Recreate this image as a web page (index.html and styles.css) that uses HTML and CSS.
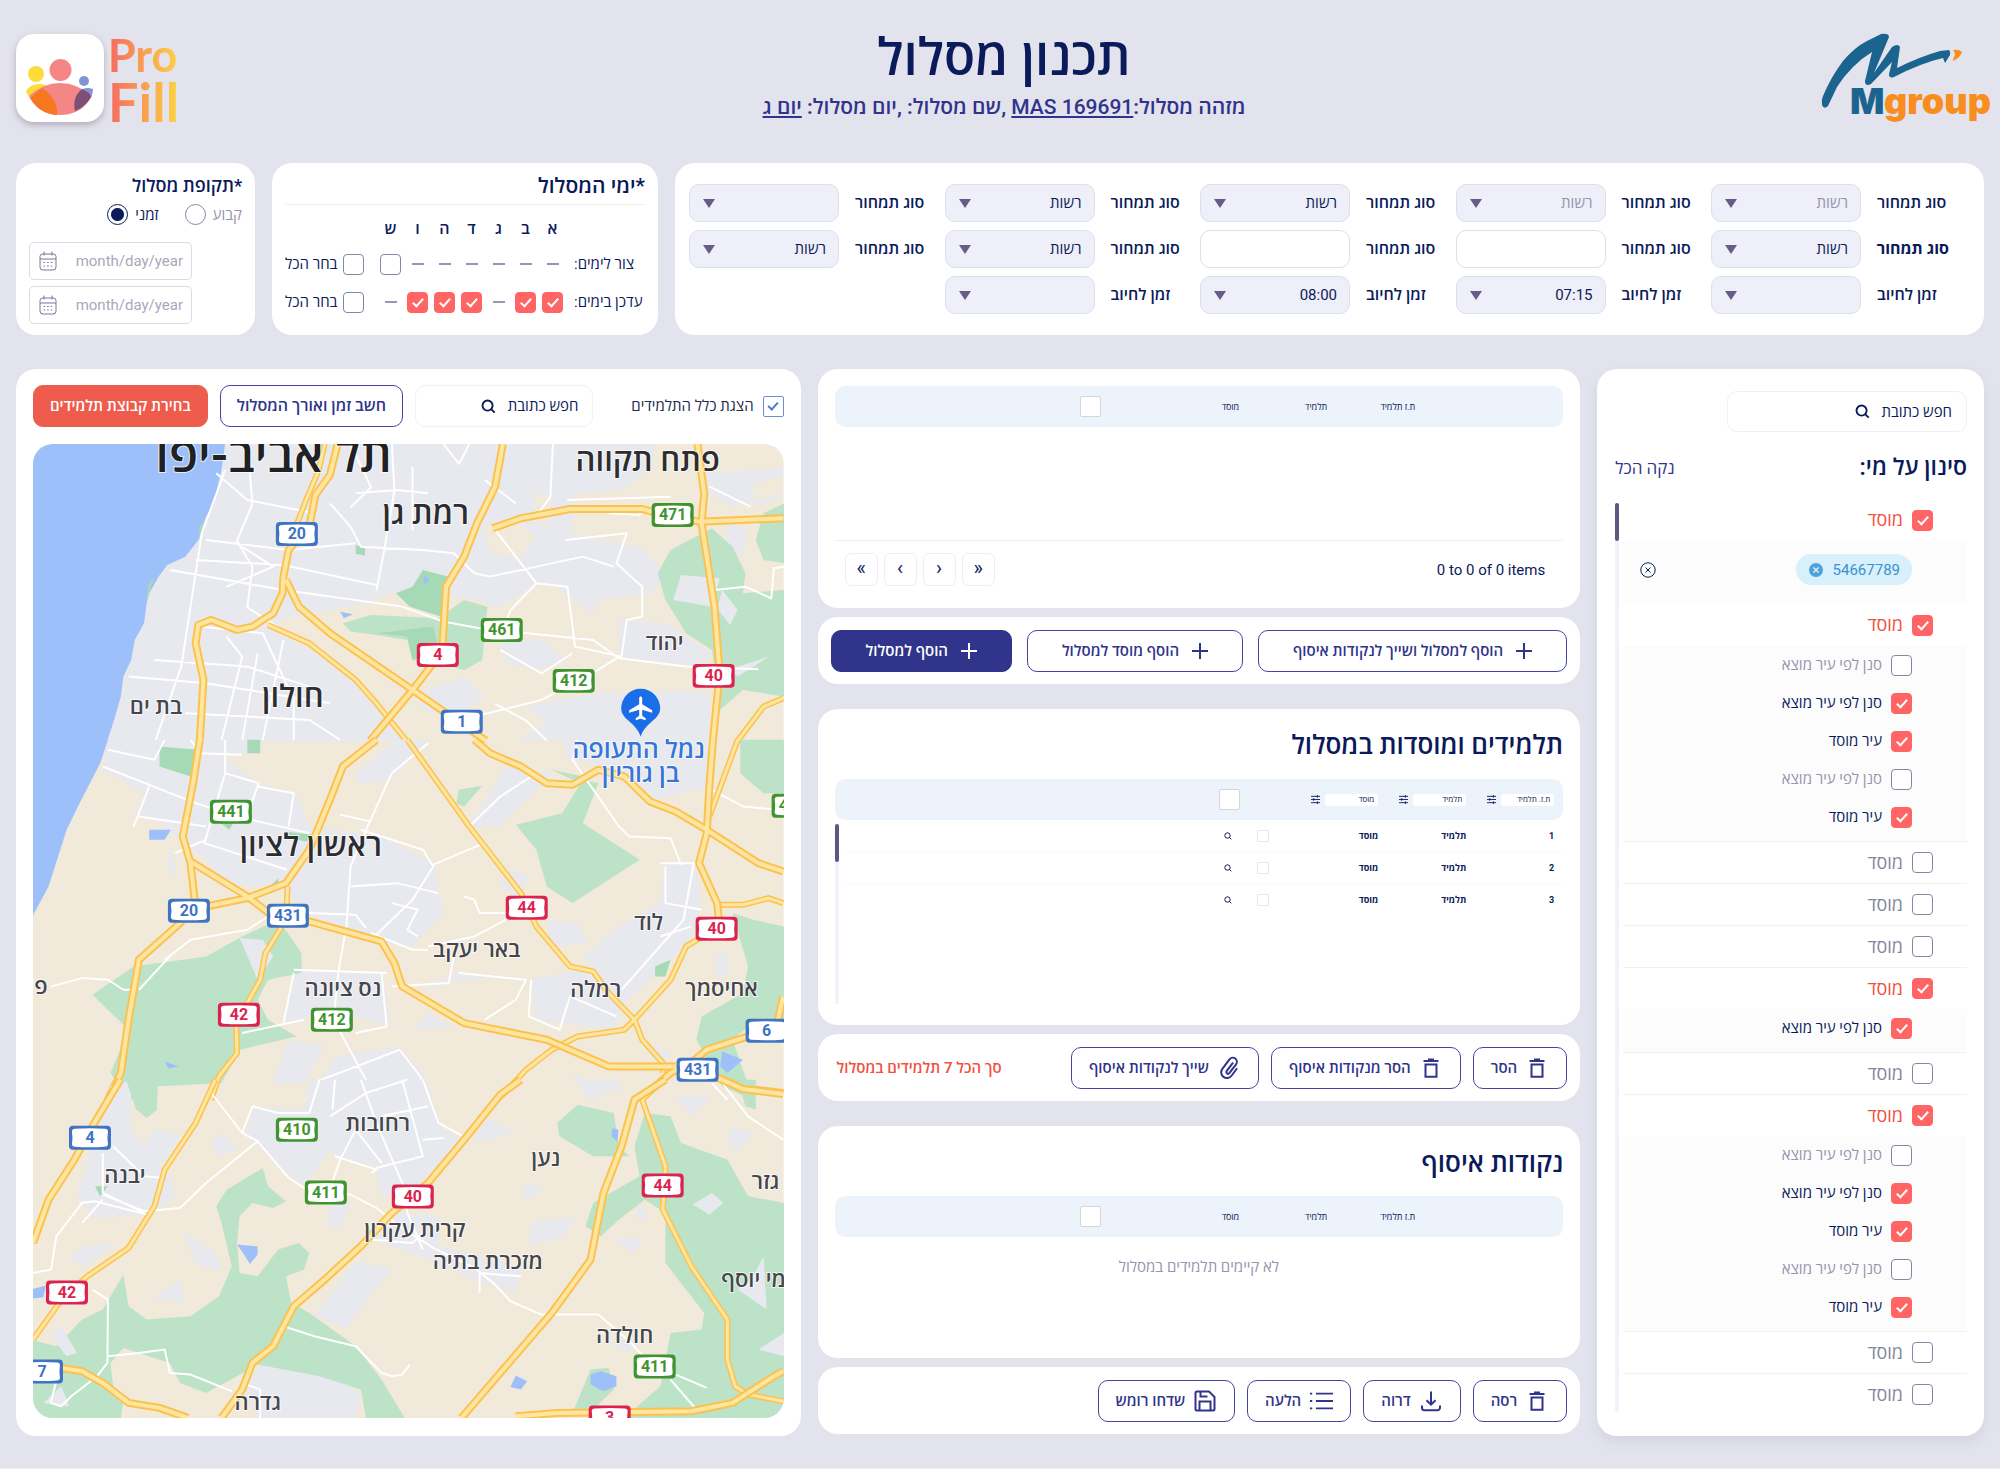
FILE: index.html
```html
<!DOCTYPE html>
<html lang="he" dir="rtl">
<head>
<meta charset="utf-8">
<meta name="viewport" content="width=device-width, initial-scale=1">
<title>תכנון מסלול</title>
<link rel="stylesheet" href="styles.css">
</head>
<body>
<svg class="sprite" aria-hidden="true">
  <symbol id="i-search" viewBox="0 0 16 16"><circle cx="7" cy="7" r="5.4"/><path d="M11 11l3.6 3.6"/></symbol>
  <symbol id="i-plus" viewBox="0 0 16 16"><path d="M8 0v16M0 8h16"/></symbol>
  <symbol id="i-trash" viewBox="0 0 24 24"><path d="M4.500 5h15M9 3.600h6M6.500 8.500v12.300h11V8.500z"/></symbol>
  <symbol id="i-clip" viewBox="0 0 24 24"><path d="M16.800 7.200l-7.600 7.600a1.700 1.700 0 0 0 2.400 2.400l7.900-7.900a4.100 4.100 0 0 0-5.800-5.800l-8.400 8.400a5.700 5.700 0 0 0 8.100 8.100l6.600-6.600" transform="rotate(-8 12 12)"/></symbol>
  <symbol id="i-download" viewBox="0 0 24 24"><path d="M12 2.500v13M7.500 11.200L12 15.700l4.500-4.500M3 16.500v2.200a2.500 2.500 0 0 0 2.500 2.500h13a2.500 2.500 0 0 0 2.500-2.500v-2.200"/></symbol>
  <symbol id="i-list" viewBox="0 0 26 24"><path d="M7.500 4H26M7.500 12H26M7.500 20H26M1 4h2.500M1 12h2.500M1 20h2.500"/></symbol>
  <symbol id="i-save" viewBox="0 0 24 24"><path d="M4 2.500h12l5.500 5.500v12a1.500 1.500 0 0 1-1.500 1.500H4A1.500 1.500 0 0 1 2.500 20V4A1.500 1.500 0 0 1 4 2.500zM6.500 21.500v-9h11v9M7.500 2.500v5h7"/></symbol>
  <symbol id="i-cal" viewBox="0 0 18 20"><path d="M3.500 3h11A2.500 2.500 0 0 1 17 5.500v10.500a3 3 0 0 1-3 3H4a3 3 0 0 1-3-3V5.500A2.500 2.500 0 0 1 3.500 3zM1 8h16M5 .500v4M13 .500v4"/><path stroke-dasharray="1.600 2" d="M4.500 11.500h9M4.500 15h9"/></symbol>
  <symbol id="i-sliders" viewBox="0 0 10 10"><path d="M0 1.500h10M0 5h10M0 8.500h10M7 0v3M3 3.500v3M7 7v3"/></symbol>
</svg>

<div class="page">
  <header class="header">
    <a class="mgroup" href="#" aria-label="Mgroup">
      <svg viewBox="0 0 171 88">
        <path fill="#1b6490" d="M2 62Q10 43 22 27 34 13 46 7L60 0q8-1 8 3L53 39 71 13q6-4 8 0l-3 21Q98 23 119 17l9-1q2 2 1 5l-5 8-2-5Q100 29 73 43q-5 2-5-3l3-12L50 50q-6 3-6-3l7-29Q41 24 32 33 23 42 16 53L7 72q-4 4-6-1-1-5 1-9z"/>
        <path fill="#f98d1e" d="M132 16q6-1 9 2-1 5-9 9 0-3 2-6 0-3-2-5z"/>
        <text x="29" y="80" class="mgroup-m">M</text><text x="63" y="80" class="mgroup-g">group</text>
      </svg>
    </a>
    <div class="heading">
      <h1>תכנון מסלול</h1>
      <p>מזהה מסלול:<a href="#"><bdi>MAS 169691</bdi></a> ,שם מסלול: ,יום מסלול: <a href="#">יום ג</a></p>
    </div>
    <a class="profill" href="#" aria-label="Pro Fill">
      <svg viewBox="0 0 170 100">
        <defs><linearGradient id="sunset" gradientUnits="userSpaceOnUse" x1="96" y1="0" x2="164" y2="0"><stop offset="0" stop-color="#f6705f"/><stop offset="1" stop-color="#fcd540"/></linearGradient></defs>
        <g fill="url(#sunset)"><text x="92" y="38" class="pro">Pro</text><text x="92" y="88" class="fill">Fill</text></g>
      </svg>
      <span class="app-tile"><svg viewBox="0 0 88 88">
        <circle cx="20" cy="40" r="8" fill="#fddb3a"/><circle cx="44.500" cy="36" r="11" fill="#f58686"/><circle cx="68" cy="47" r="5" fill="#7f95d6"/>
        <path fill="#fddb3a" d="M10 58q3-8 14-8 5 0 10 4L14 64z"/><path fill="#7f95d6" d="M63 57q6-5 14-2 0 6-4 11z"/>
        <path fill="#f58686" d="M13 62q14-13 31-13t32 13Q66 81 44 81T13 62z"/>
        <path fill="#f6781e" d="M14 64l12-10Q42 64 41 81 24 80 14 64z"/><path fill="#7b4f78" d="M66 55q9 4 9 8-6 10-16 14-3-14 7-22z"/>
      </svg></span>
    </a>
  </header>

  <section class="top">
    <form class="card fields">
      <div class="field"><label for="f1">סוג תמחור</label><span class="select"><select id="f1" class="muted"><option>רשות</option></select></span></div>
      <div class="field"><label for="f2">סוג תמחור</label><span class="select"><select id="f2" class="muted"><option>רשות</option></select></span></div>
      <div class="field"><label for="f3">סוג תמחור</label><span class="select"><select id="f3"><option>רשות</option></select></span></div>
      <div class="field"><label for="f4">סוג תמחור</label><span class="select"><select id="f4"><option>רשות</option></select></span></div>
      <div class="field"><label for="f5">סוג תמחור</label><span class="select"><select id="f5"><option></option></select></span></div>
      <div class="field"><label for="f6" class="strong">סוג תמחור</label><span class="select"><select id="f6"><option>רשות</option></select></span></div>
      <div class="field"><label for="f7">סוג תמחור</label><input id="f7" type="text"></div>
      <div class="field"><label for="f8">סוג תמחור</label><input id="f8" type="text"></div>
      <div class="field"><label for="f9">סוג תמחור</label><span class="select"><select id="f9"><option>רשות</option></select></span></div>
      <div class="field"><label for="f10">סוג תמחור</label><span class="select"><select id="f10"><option>רשות</option></select></span></div>
      <div class="field"><label for="f11">זמן לחיוב</label><span class="select"><select id="f11"><option></option></select></span></div>
      <div class="field"><label for="f12">זמן לחיוב</label><span class="select"><select id="f12"><option>07:15</option></select></span></div>
      <div class="field"><label for="f13">זמן לחיוב</label><span class="select"><select id="f13"><option>08:00</option></select></span></div>
      <div class="field"><label for="f14">זמן לחיוב</label><span class="select"><select id="f14"><option></option></select></span></div>
    </form>

    <section class="card days">
      <h2>*ימי המסלול</h2>
      <div class="day-row letters"><span></span><b>א</b><b>ב</b><b>ג</b><b>ד</b><b>ה</b><b>ו</b><b>ש</b></div>
      <div class="day-row"><span>צור לימים:</span><i></i><i></i><i></i><i></i><i></i><i></i><input type="checkbox" class="check" aria-label="צור ש"><label class="all"><input type="checkbox" class="check">בחר הכל</label></div>
      <div class="day-row"><span>עדכן בימים:</span><input type="checkbox" class="check" aria-label="עדכן א" checked><input type="checkbox" class="check" aria-label="עדכן ב" checked><i></i><input type="checkbox" class="check" aria-label="עדכן ד" checked><input type="checkbox" class="check" aria-label="עדכן ה" checked><input type="checkbox" class="check" aria-label="עדכן ו" checked><i></i><label class="all"><input type="checkbox" class="check">בחר הכל</label></div>
    </section>

    <section class="card period">
      <h2>*תקופת מסלול</h2>
      <div class="radios"><label class="muted">קבוע<input type="radio" name="period"></label><label>זמני<input type="radio" name="period" checked></label></div>
      <div class="dates">
        <div class="date"><input type="text" placeholder="month/day/year" aria-label="מתאריך"><svg class="icon"><use href="#i-cal"/></svg></div>
        <div class="date"><input type="text" placeholder="month/day/year" aria-label="עד תאריך"><svg class="icon"><use href="#i-cal"/></svg></div>
      </div>
    </section>
  </section>

  <main class="main">
    <aside class="card filter">
      <div class="search"><input type="text" placeholder="חפש כתובת" aria-label="חפש כתובת"><svg class="icon"><use href="#i-search"/></svg></div>
      <div class="filter-head"><h2>סינון על מי:</h2><button type="button" class="clear">נקה הכל</button></div>
      <div class="scroller">
        <div class="list">
          <label class="row on"><input type="checkbox" class="check" checked>מוסד</label>
          <div class="chip-row"><span class="chip">54667789<button type="button" aria-label="הסר 54667789"><svg viewBox="0 0 14 14"><circle cx="7" cy="7" r="7" fill="#4ea4da"/><path d="M4.500 4.500l5 5M9.500 4.500l-5 5" stroke="#d8effc" stroke-width="1.600"/></svg></button></span>
            <button type="button" class="reset" aria-label="נקה"><svg viewBox="0 0 16 16"><circle cx="8" cy="8" r="7.200"/><path d="M5.500 5.500l5 5M10.500 5.500l-5 5"/></svg></button></div>
          <label class="row on"><input type="checkbox" class="check" checked>מוסד</label>
          <div class="group">
            <label><input type="checkbox" class="check">סנן לפי עיר מוצא</label>
            <label class="on"><input type="checkbox" class="check" checked>סנן לפי עיר מוצא</label>
            <label class="on"><input type="checkbox" class="check" checked>עיר מוסד</label>
            <label><input type="checkbox" class="check">סנן לפי עיר מוצא</label>
            <label class="on"><input type="checkbox" class="check" checked>עיר מוסד</label>
          </div>
          <label class="row"><input type="checkbox" class="check">מוסד</label>
          <label class="row"><input type="checkbox" class="check">מוסד</label>
          <label class="row"><input type="checkbox" class="check">מוסד</label>
          <label class="row on"><input type="checkbox" class="check" checked>מוסד</label>
          <div class="group"><label class="on"><input type="checkbox" class="check" checked>סנן לפי עיר מוצא</label></div>
          <label class="row"><input type="checkbox" class="check">מוסד</label>
          <label class="row on"><input type="checkbox" class="check" checked>מוסד</label>
          <div class="group">
            <label><input type="checkbox" class="check">סנן לפי עיר מוצא</label>
            <label class="on"><input type="checkbox" class="check" checked>סנן לפי עיר מוצא</label>
            <label class="on"><input type="checkbox" class="check" checked>עיר מוסד</label>
            <label><input type="checkbox" class="check">סנן לפי עיר מוצא</label>
            <label class="on"><input type="checkbox" class="check" checked>עיר מוסד</label>
          </div>
          <label class="row"><input type="checkbox" class="check">מוסד</label>
          <label class="row"><input type="checkbox" class="check">מוסד</label>
        </div>
        <div class="track"><div class="thumb"></div></div>
      </div>
    </aside>

    <div class="middle">
      <div class="stack">
        <section class="card results">
          <table class="plain">
            <thead><tr><th>ת.ז תלמיד</th><th>תלמיד</th><th>מוסד</th><th><input type="checkbox" class="box" aria-label="בחר הכל"></th></tr></thead>
          </table>
          <div class="pager">
            <span dir="ltr">0 to 0 of 0 items</span>
            <nav dir="ltr"><button type="button">«</button><button type="button">‹</button><button type="button">›</button><button type="button">»</button></nav>
          </div>
        </section>
        <section class="card bar bar-add">
          <button type="button" class="btn wide"><svg class="icon"><use href="#i-plus"/></svg>הוסף למסלול ושייך לנקודות איסוף</button>
          <button type="button" class="btn wide"><svg class="icon"><use href="#i-plus"/></svg>הוסף מוסד למסלול</button>
          <button type="button" class="btn wide solid"><svg class="icon"><use href="#i-plus"/></svg>הוסף למסלול</button>
        </section>
      </div>

      <div class="stack">
        <section class="card students">
          <h2>תלמידים ומוסדות במסלול</h2>
          <table class="rows">
            <thead><tr>
              <th><span class="colfilter"><input type="text" value="ת.ז. תלמיד" aria-label="ת.ז. תלמיד"><svg class="icon"><use href="#i-sliders"/></svg></span></th>
              <th><span class="colfilter"><input type="text" value="תלמיד" aria-label="תלמיד"><svg class="icon"><use href="#i-sliders"/></svg></span></th>
              <th><span class="colfilter"><input type="text" value="מוסד" aria-label="מוסד"><svg class="icon"><use href="#i-sliders"/></svg></span></th>
              <th></th><th><input type="checkbox" class="box" aria-label="בחר הכל"></th></tr></thead>
          </table>
          <div class="scroller">
            <table class="rows body">
              <tbody>
                <tr><td>1</td><td>תלמיד</td><td>מוסד</td><td><input type="checkbox" class="box tiny" aria-label="שורה 1"></td><td><svg class="icon"><use href="#i-search"/></svg></td></tr>
                <tr><td>2</td><td>תלמיד</td><td>מוסד</td><td><input type="checkbox" class="box tiny" aria-label="שורה 2"></td><td><svg class="icon"><use href="#i-search"/></svg></td></tr>
                <tr><td>3</td><td>תלמיד</td><td>מוסד</td><td><input type="checkbox" class="box tiny" aria-label="שורה 3"></td><td><svg class="icon"><use href="#i-search"/></svg></td></tr>
              </tbody>
            </table>
            <div class="track"><div class="thumb"></div></div>
          </div>
        </section>
        <section class="card bar">
          <button type="button" class="btn"><svg class="icon"><use href="#i-trash"/></svg>הסר</button>
          <button type="button" class="btn"><svg class="icon"><use href="#i-trash"/></svg>הסר מנקודות איסוף</button>
          <button type="button" class="btn"><svg class="icon"><use href="#i-clip"/></svg>שייך לנקודות איסוף</button>
          <strong class="total">סך הכל 7 תלמידים במסלול</strong>
        </section>
      </div>

      <div class="stack">
        <section class="card pickups">
          <h2>נקודות איסוף</h2>
          <table class="plain">
            <thead><tr><th>ת.ז תלמיד</th><th>תלמיד</th><th>מוסד</th><th><input type="checkbox" class="box" aria-label="בחר הכל"></th></tr></thead>
          </table>
          <p>לא קיימים תלמידים במסלול</p>
        </section>
        <section class="card bar">
          <button type="button" class="btn"><svg class="icon"><use href="#i-trash"/></svg>רסה</button>
          <button type="button" class="btn"><svg class="icon"><use href="#i-download"/></svg>דרוה</button>
          <button type="button" class="btn"><svg class="icon"><use href="#i-list"/></svg>הלעה</button>
          <button type="button" class="btn"><svg class="icon"><use href="#i-save"/></svg>שדחו רומש</button>
        </section>
      </div>
    </div>

    <section class="card mapcard">
      <div class="toolbar">
        <label class="show-all"><input type="checkbox" class="check blue" checked>הצגת כלל התלמידים</label>
        <div class="search"><input type="text" placeholder="חפש כתובת" aria-label="חפש כתובת במפה"><svg class="icon"><use href="#i-search"/></svg></div>
        <button type="button" class="btn fit">חשב זמן ואורך המסלול</button>
        <button type="button" class="btn fit red">בחירת קבוצת תלמידים</button>
      </div>
      <svg class="map" viewBox="0 0 751 975" preserveAspectRatio="xMidYMid slice" role="img" aria-label="מפה">
        <rect width="751" height="975" fill="#f1e9d9"/>
        <!-- north -->
        <g transform="translate(-33.500 -84) scale(.5165 .3334)">
          <path class="urban" d="M430 252h840l-10 80-60 60-90 10v120l130 40 50 80-30 60-100 20-10 40-70-80-40-15-50 55-30 20-30-20-70-20-90-10-70 40-140 40-40 30 70 60 50 40 50 60 30 50 30 70 50 62H205l20-90 50-300 20-120 50-70 40-60 30-150z"/>
          <path class="urban" d="M1370 340l148-15v75l-100 40-50-50zM1410 490l40 20-10 80-30-40zM1020 1040l130-40 150-12 75 12v142H1000l60-50zM1200 780l90 10 90 90-20 40-160-30zM970 830l80 10 50 60-60 30-60-20zM810 1000l90-50 40 60-50 60-70-20zM640 1040l60 20 60 82H650zM1460 440l58-30v-60l-58 20z"/>
          <path class="land" d="M940 500l50-30 50 60-30 60-60-10zM1040 400l30 10-10 90-30-20zM1170 1000l100-30 60 20-150 10z"/>
          <path class="sea" d="M60 252h377l-7 78-15 100-15 40-15 70-25 50-35 25-17 35-18 50-5 30-5 60-18 50-7 60-15 50-5 60-13 70-14 66H60z"/>
          <path class="green" d="M1380 505l40 55 25 80-5 60 80-10v320l-80-20-45 60-15-180-50-50-40-100-15-80 25-70zM1520 430l-40 30-15 80 15 60 40 10zM665 790l55-25 130 10 50-55 45 20-10 160-35 30-50-20-50-10-10-60-60-15-50-10z"/>
          <path class="park" d="M820 630l50 20-15 120-60-30-27-40 32-20zM690 555l18 10v22l-18-6zM300 650l-16 75 4-50zM395 480l-8 60v-40zM730 820l60 10 10 70 50-40-10-60z"/>
          <path class="urban" d="M1320 645l75 10-15 85-75-20zM1400 690l30 60-15 45-25-50zM1410 930l80-40-60 60z"/>
          <path class="sea" d="M660 755l25 8-18 12zM822 645l12 15-12 12z"/>
          <path class="street" d="M437 330l-45 190-40 400-50 222M400 540l160 30 130-20M380 600l170 15 180 60M330 630l220 60 230 50 80 45 70 20 220 35 50 55 130 25 140 8M420 340l60 80 130 40M480 252l10 180-30 110 30 80-10 120 60 60M640 430l40 70 20 60 120 10 60 10 40 60 30 10 180-60 60 30M680 252l40 130-40 60M760 252l5 140-20 180-15 120M800 320v190M690 400l80-10 60 10M860 252l30 60 20-60M1072 252l-5 160-30 60M1000 430l-60-70M960 510l80 160 60 10 15 180 90 30 10-110 30-10v-90l-50-70 20-90-120 20M1180 460l60 5v-20M1040 670l-50 80-20 80M1110 880l-60 60-80-70M1200 890l-40 40-110 90-130 50M1375 380l80 60M1385 690l60-10 50 35 5-90 20-5M390 800l120 20 60 200v120M440 830l30 60-40 252M300 900l180 20 120 60M500 880l-30 262M550 840l-40 300M250 950l150 20 240 60M360 1060l240 20 60 60M1060 1142l-40-60-60-50M1100 420l200-10M470 560l60 60-90 60"/>
          <path class="road" d="M630 252l-12 80-22 80-20 80M520 795l80 55 90 110 40 70 58 112M1518 1015l-38 25-50 102"/>
          <path class="road2" d="M630 252l-12 80-22 80-20 80M520 795l80 55 90 110 40 70 58 112M1518 1015l-38 25-50 102"/>
          <path class="road big" d="M655 252l-15 93-28 60-12 95-40 70-10 80-2 50-18 60-40 40-30 10-50-30-25 15-5 55 15 110-7 182M555 660l25 80 60 80 160 170 142 152M975 252l-15 128-35 110-25 100-35 90-7 180-23 60-35 70-82 152M955 505l55-30 95-28h140l55 23 55 15 163-10M1352 252l13 148-5 90 25 250 10 200-13 202"/>
          <path class="road2 big" d="M655 252l-15 93-28 60-12 95-40 70-10 80-2 50-18 60-40 40-30 10-50-30-25 15-5 55 15 110-7 182M555 660l25 80 60 80 160 170 142 152M975 252l-15 128-35 110-25 100-35 90-7 180-23 60-35 70-82 152M955 505l55-30 95-28h140l55 23 55 15 163-10M1352 252l13 148-5 90 25 250 10 200-13 202"/>
        </g>
        <!-- centre -->
        <g transform="translate(-33.500 296) scale(.5165 .3334)">
          <path class="urban" d="M205 0h185l50 60 60 70 75 30 25 100 140 30 100 80 20 150-60 100-100-20-100-80-60-80-100-10-40-70-50-60-50-60-40-10 20-70-80-70zM390 0h90v40l-60 10zM700 130l60-10 70-120h-60l-80 100zM1090 0h290l-10 140-100 40-70-90-50-20-50-10zM1290 370h60l10 130-20 100-130 190-20 80-150-30-10-120 120-40-20-30 70-90 80-70zM570 690l170 10 20 160-80-30h-80l-50 20zM980 80l90 20-100 160h-60zM650 950l120-30 50 80 20 80H600zM330 310l15 110-20-40zM880 700l140 10-130 10-80 40zM560 900l70 20-40 110h-60zM980 390l50 20-30 60-30-30zM1060 540l60 10 20 60-70 10zM1390 640h20v60l-20 20zM1240 900l60 40-20 50zM830 820l50 40-80 10zM1110 1000l70 60-40 20z"/>
          <path class="sea" d="M60 0h150l-15 70-40 120-25 80-35 170-35 100z"/>
          <path class="green" d="M1000 255l90-35 40-100 30 10-30 120 110 110-130 130-50-50-20-110zM890 150l45-12-35 62-15-10zM1435 0h85v160h-40l-45-60zM180 765l80-85 140-30 70-60 70-50 45 100v60l-65 20-20 60 20 60 55 50-110 40-35 100-130 10v40h-50l-35-80 35-130zM1420 520l40 20 60 20v290l-70 10-30 40 20 90 20 90-60-40-50-140 10-70 80-70 10-80zM1070 90l60 20-20 10z"/>
          <path class="park" d="M310 20l75 10-15 80-60-30zM480 0h25v40h-25zM1270 680l30-20-10 50h-20zM425 245h30l-10 25zM555 275l50 10-10 20-40-10zM540 415v30h-20z"/>
          <path class="urban" d="M465 595l45 5 20 50-30 70z"/>
          <path class="sea" d="M290 270h42l-12 30h-30zM1400 935l40 25-30 40-14-20zM320 965l27 15-20 6z"/>
          <path class="street" d="M200 80l180 110 80 40 140 50M290 140l-30 120M270 230l130 30M437 0v100l-40 210 160 80M400 300l-60 40M437 100l65 30-25 110M500 140l70 20-10 100M830 10l-70 90-50 170-30 110-8 180-15 130-10 150 80 230M660 225l60 20M700 270l120 60 20 50-40 100-80 120M840 375l90-60M910 260l60-90 60-60M680 440l90-10 80 30M760 490l50 20-20 60 20 20M720 580l80 50h30M330 650l-60 100M320 660l50-60 110-30 40-40M100 740l60-25 50 5 30 30h15M600 520l90 5 20 40M570 700l-20 150M740 700l10 160-60 20M570 690l180 10M470 880l120-40M880 650l-10 80-110 10M890 700l130 20-20 60-60 60M1030 720l-5 110 60 40 20-100 90 60M980 540l-60 50-90 30M1120 0l-10 60 90 200 20 30 80 5 20 80M1345 370l-20 170-120 210M1280 370h70M1280 590l60-30M1380 150l60 50 70 10M900 470l20 10 10 40h50M1290 380v110l70 20M210 30l90 30 20-60M370 0l20 40 80 5M595 1080l10-50 70-40 100-60 40 80 15 70M700 1060l90-40M1380 1030l30 50"/>
          <path class="road" d="M558 440l-3 100-40 100-10 80-25 70-22 40 2 110-35 70-15 70M790 0l120 260 100 200 30 100 65 120 45 15 30 65 50 80 15 60 40 70v30M1430 0l-55 230M1390 495h50l50-20 28 15M1395 560l-65 60-30 100-70 120-20 30-90 20-50 40-50 60-55 90"/>
          <path class="road2" d="M558 440l-3 100-40 100-10 80-25 70-22 40 2 110-35 70-15 70M790 0l120 260 100 200 30 100 65 120 45 15 30 65 50 80 15 60 40 70v30M1430 0l-55 230M1390 495h50l50-20 28 15M1395 560l-65 60-30 100-70 120-20 30-90 20-50 40-50 60-55 90"/>
          <path class="road big" d="M388 0l-13 130-20 160 15 80 8 110-28 70-80 110-20 180-15 160-25 80M730 0l-65 80-25 100-40 150-45 100-75 45-80 25-30 20M370 365l110 105 50 60 70 15 140 60 25 65 15 70 120 110 160 50 120 80h130M920 0l30 40 60 40 50 50 50 5 50-45 50 20 50 75 50 30 60 55 100 100 48 25M1382 0l-7 140-5 140-15 90 35 120 5 70M1518 770l-13 90M1450 890l-80 40-30 40-40 30-60 80M1385 1010l55 35 78 15"/>
          <path class="road2 big" d="M388 0l-13 130-20 160 15 80 8 110-28 70-80 110-20 180-15 160-25 80M730 0l-65 80-25 100-40 150-45 100-75 45-80 25-30 20M370 365l110 105 50 60 70 15 140 60 25 65 15 70 120 110 160 50 120 80h130M920 0l30 40 60 40 50 50 50 5 50-45 50 20 50 75 50 30 60 55 100 100 48 25M1382 0l-7 140-5 140-15 90 35 120 5 70M1518 770l-13 90M1450 890l-80 40-30 40-40 30-60 80M1385 1010l55 35 78 15"/>
        </g>
        <!-- south -->
        <g transform="translate(-33.500 636) scale(.5165 .3334)">
          <path class="urban" d="M215 20l40-20v150l75 140 10 60-40 50-120 20-30-70 20-100zM490 80l100 10 10-90h220l40 150 40 30-70 150-90 20-10-90-80-30-10-20-50 110-40-50-70-100zM690 545l70 20-90 180-60-35zM510 850l130 40 60 50-10 75H500l-30-85zM770 400l80 10v90l160 60-10 80-80-40-120-80-80-40zM300 150l50 20-30 80-50-30zM940 110l60 50-80 30zM1030 430l90-20-30 60-65 30zM1020 310l35 20-40 30zM1190 480l60-5-25 45zM355 455l60 60 15 60-50-20zM350 600l8 70-60-15zM160 500l65-10-60 70-30-20zM640 370h40l-20 80-25-10zM1110 0h90v40zM1310 50h70l-40 60zM1420 140l40 20-30 60-20-30zM410 190l20-30 30 50-40 20zM1180 790l60-10-20 40z"/>
          <path class="green" d="M245 0h62l-2 90-20 25-20-25zM60 780l50 20 25-40 25-40 40-30 40-105 10 95 35 40 85-10 55-60 25-90-20-130-10-50 20-50 70-65 10 55 35 45-25 20-40-15-25 40-5 80 5 90 35 10 40-80 40-20 20 30-10 50-35 20 10 80 35 30 90 100 50 100 45 115h-75l-10-85-80-40-120-35-40 35-60 50-50-30-20-60-90-45-25 45 5 70 20 40-5 55H60zM1080 130l40-55 70 25 10 100 20 30h-70l-65-60zM1250 100l50 10 20 80 90 50 40 110 70 20v645h-310l70-95 20-160 60-10 5-50-75-150V400l-40-40-50 60-35 50-30-30 15-70 90-80-10-90zM1145 870l35-5 10 65-40 60-40 10zM1430 0h35v90l-20-10z"/>
          <path class="urban" d="M1380 340l22 30-27 35-32-30zM1480 530l6 160-56-60 30-40zM1470 810l50-50v70zM1240 370l20 50-30-5zM120 740l30 80-20 10-30-60zM120 920l15 60-50-10z"/>
          <path class="sea" d="M1145 885l20-10 30 15v30l-25 15-25-20zM1000 888l22 17-12 25-20-8zM460 495l40 5v25l-15 28-10-25zM1187 145l12 5-2 35-12-15zM60 630l30-12-5 35-25 5z"/>
          <path class="park" d="M185 320h25l-15 30z"/>
          <path class="street" d="M410 40l60 120 30 25 60 110 30 30 90 20 50 40 50 60 60 60 80 60 40 50 30 50 60 40h110l60 80 30 50 60 50 60 40M500 185L400 310l-50 75-70 10-80-50M200 220v120l80 60M160 430l40-70M160 370l-50 100-10 100-35 10M155 370l30-5 100 40M220 200l60 90 40 5M490 80l-20 80M490 80l50 20h60l20-100M640 110l70-70 80-40M700 0l30 130 50 180 10 90 30 110M780 0l40 230-90 35M820 0l30 130 60 50M660 240l30-90 50 100M650 230l80 40-10 10M660 240l-20 90M740 110l90-30M720 480l80 10 20-30M180 630l30 30-1 190-20 40-50 60-20 30-20-10 10-60M210 830l60-10 50-10 10 70 40 5 80 50M550 740l60 30 80 30 50 80 20 10 20-5 15-30M930 640v-60l80 10M1400 10l50 100 68 70M1300 900l50 90M400 60l10-20M820 180l40-5M470 910l35 20v85M650 0l-5 90"/>
          <path class="road" d="M418 0l-38 130-60 140-20 110-50 125-80 85-50 70-55 120M1285 0l-40 60 45 200-5 130 55 170 70 160v120l15 80 25 25 68 20"/>
          <path class="road2" d="M418 0l-38 130-60 140-20 110-50 125-80 85-50 70-55 120M1285 0l-40 60 45 200-5 130 55 170 70 160v120l15 80 25 25 68 20"/>
          <path class="road big" d="M234 0l-54 140-35 100-50 120-30 130M1010 0l-40 45-70 135-70 130-70 90-60 100-70 100-60 80-20 60-20 60-40 50-20 80-40 85M1290 0l-60 60-25 140-35 140-25 200-75 160-100 180-75 135M1000 1010l80-10 145-3 115-2 80-25 70-70 28-25M100 860l60 15 40 35 50 60 60 15 55 30M1385-10l55 38 78 15"/>
          <path class="road2 big" d="M234 0l-54 140-35 100-50 120-30 130M1010 0l-40 45-70 135-70 130-70 90-60 100-70 100-60 80-20 60-20 60-40 50-20 80-40 85M1290 0l-60 60-25 140-35 140-25 200-75 160-100 180-75 135M1000 1010l80-10 145-3 115-2 80-25 70-70 28-25M100 860l60 15 40 35 50 60 60 15 55 30M1385-10l55 38 78 15"/>
        </g>
        <g class="city">
          <text class="xl" x="241" y="28">תל אביב-יפו</text>
          <g class="lg"><text x="615" y="27">פתח תקווה</text><text x="393" y="80">רמת גן</text><text x="260" y="263">חולון</text><text x="278" y="412">ראשון לציון</text></g>
          <text x="123" y="270">בת ים</text><text x="632" y="206">יהוד</text><text x="616" y="486">לוד</text><text x="444" y="513">באר יעקב</text><text x="310" y="552">נס ציונה</text><text x="563" y="553">רמלה</text><text x="689" y="552">אחיסמך</text><text x="5" y="550">פי</text>
          <text x="345" y="687">רחובות</text><text x="92" y="739">יבנה</text><text x="513" y="722">נען</text><text x="733" y="745">גזר</text><text x="382" y="793">קרית עקרון</text><text x="455" y="825">מזכרת בתיה</text><text x="721" y="843">מי יוסף</text><text x="592" y="899">חולדה</text><text x="225" y="967">גדרה</text>
          <g class="air"><text x="606" y="314">נמל התעופה</text><text x="608" y="338">בן גוריון</text></g>
        </g>
        <path fill="#1a6fe8" d="M608 293C604 279 588.500 276 588.500 264.500a19.500 19.500 0 0 1 39 0C627.500 276 612 279 608 293z"/>
        <path fill="#fff" d="M606.500 254q1.500-3 3 0v6.500l10 6v2.500l-10-3v6l3.500 2.500v2l-5-1.500-5 1.500v-2l3.500-2.500v-6l-10 3V266.500l10-6z"/>
        <g class="shields">
          <g class="b"><g transform="translate(264 90)"><rect/><path/><text>20</text></g><g transform="translate(429 278)"><rect/><path/><text>1</text></g><g transform="translate(156 467)"><rect/><path/><text>20</text></g><g transform="translate(255 472)"><rect/><path/><text>431</text></g><g transform="translate(734 587)"><rect/><path/><text>6</text></g><g transform="translate(665 626)"><rect/><path/><text>431</text></g><g transform="translate(57 694)"><rect/><path/><text>4</text></g><g transform="translate(9 928)"><rect/><path/><text>7</text></g></g>
          <g class="g"><g transform="translate(640 71)"><rect/><path/><text>471</text></g><g transform="translate(469 186)"><rect/><path/><text>461</text></g><g transform="translate(541 237)"><rect/><path/><text>412</text></g><g transform="translate(198 368)"><rect/><path/><text>441</text></g><g transform="translate(760 362)"><rect/><path/><text>443</text></g><g transform="translate(299 576)"><rect/><path/><text>412</text></g><g transform="translate(264 686)"><rect/><path/><text>410</text></g><g transform="translate(293 749)"><rect/><path/><text>411</text></g><g transform="translate(622 923)"><rect/><path/><text>411</text></g></g>
          <g class="r"><g transform="translate(405 211)"><rect/><path/><text>4</text></g><g transform="translate(681 232)"><rect/><path/><text>40</text></g><g transform="translate(494 464)"><rect/><path/><text>44</text></g><g transform="translate(684 485)"><rect/><path/><text>40</text></g><g transform="translate(206 571)"><rect/><path/><text>42</text></g><g transform="translate(380 753)"><rect/><path/><text>40</text></g><g transform="translate(630 742)"><rect/><path/><text>44</text></g><g transform="translate(34 849)"><rect/><path/><text>42</text></g><g transform="translate(577 974)"><rect/><path/><text>3</text></g></g>
        </g>
      </svg>
    </section>
  </main>
</div>
</body>
</html>
```

FILE: styles.css
```css
* { box-sizing: border-box; }
:root {
  --navy: #0b1a5b;
  --indigo: #30348a;
  --coral: #ff6565;
  --red: #f2503f;
  --grey: #9496ad;
  --bg: #e3e3ed;
}
body {
  margin: 0;
  background: var(--bg);
  color: var(--navy);
  font: 15px/20px Roboto, "Open Sans", "Liberation Sans", sans-serif;
}
h1, h2, p { margin: 0; }
button, input, select { font: inherit; color: inherit; }
button { cursor: pointer; }
a { color: inherit; }
.sprite { position: absolute; width: 0; height: 0; }
.icon { width: 24px; height: 24px; flex: none; fill: none; stroke: currentColor; stroke-width: 2; }
.card { background: #fff; border-radius: 20px; }
.page { padding-bottom: 32px; border-bottom: 2px solid #ededf3; }

/* header */
.header { display: grid; grid-template-columns: 1fr auto 1fr; padding: 28px 8px 0 16px; height: 163px; }
.mgroup, .profill { padding-top: 6px; }
.mgroup svg { width: 171px; height: 88px; overflow: visible; }
.mgroup { direction: rtl; }
.mgroup text { font: 900 36px Inter, sans-serif; direction: ltr; }
.mgroup-m { fill: #1b6490; }
.mgroup-g { fill: #f98d1e; }
.heading { text-align: center; }
.heading h1 { font-size: 51px; line-height: 60px; font-weight: 600; }
.heading p { font-size: 21px; line-height: 28px; margin-top: 5px; font-weight: 600; color: var(--indigo); }
.heading bdi { font-weight: 500; }
.profill { justify-self: end; display: grid; }
.profill > * { grid-area: 1 / 1; }
.profill > svg { width: 170px; height: 100px; overflow: visible; }
.profill text { direction: ltr; font-family: Lato, sans-serif; font-weight: 700; }
.pro { font-size: 45px; }
.fill { font-size: 54px; }
.app-tile { justify-self: end; width: 88px; height: 88px; border-radius: 18px; background: #fff; box-shadow: 0 3px 6px #8a7f8f88; }

/* top cards */
.top { display: grid; grid-template-columns: 1309fr 386fr 239fr; gap: 17px; padding: 0 16px; }
.fields { display: grid; grid-template-columns: repeat(5, auto); justify-content: space-between; align-content: start; gap: 8px; padding: 21px 35px 20px 14px; }
.field { display: flex; gap: 16px; align-items: center; }
.field label { width: 72px; text-align: end; font-size: 16px; font-weight: 600; white-space: nowrap; }
.field .strong { font-weight: 700; }
.field > input, .select select { width: 150px; height: 38px; border: 1px solid #d9e0ee; border-radius: 10px; background: #fff; padding: 0 12px; }
.select { position: relative; }
.select select { display: block; appearance: none; background: #eeeff8; }
.select .muted { color: var(--grey); }
.select::after { content: ""; position: absolute; left: 14px; top: 15px; border: 6px solid transparent; border-top: 9px solid #665c85; border-bottom: 0; }

.days { padding: 11px 13px; }
.days h2, .period h2 { font-size: 21px; line-height: 24px; font-weight: 600; }
.days h2 { padding-bottom: 6px; border-bottom: 1px solid #eee; }
.day-row { display: grid; grid-template-columns: 79px repeat(7, 27px) 1fr; align-items: center; justify-items: center; height: 38px; }
.day-row > span { justify-self: stretch; text-align: end; padding-inline-end: 8px; white-space: nowrap; }
.letters { height: 40px; padding-top: 8px; }
.letters b { font-weight: 600; font-size: 16px; }
.day-row i { width: 12px; height: 2px; background: #9597b3; }
.all { display: flex; gap: 6px; align-items: center; justify-self: end; white-space: nowrap; }

.check { appearance: none; margin: 0; width: 21px; height: 21px; flex: none; border: 1px solid #8487a3; border-radius: 4px; background: #fff; display: grid; place-items: center; }
.check:checked { background: var(--coral); border-color: var(--coral); }
.check:checked::after { content: ""; width: 4px; height: 9px; border: solid #fff; border-width: 0 2px 2px 0; transform: translateY(-1px) rotate(42deg); }
.check.blue { border-color: #6d8fd0; background: #fff; border-radius: 2px; }
.check.blue::after { width: 4px; height: 8px; border-color: #4f78c4; }

.period { padding: 11px 13px; }
.period h2 { font-size: 18px; }
.radios { display: flex; gap: 26px; margin: 6px 0 17px; }
.radios label { display: flex; gap: 7px; align-items: center; }
.muted { color: var(--grey); }
.radios input { appearance: none; margin: 0; width: 21px; height: 21px; border: 1px solid #8487a3; border-radius: 50%; background: #fff; }
.radios input:checked { border-color: var(--navy); background: radial-gradient(var(--navy) 0 6px, #fff 7px); }
.dates { display: grid; gap: 6px; justify-content: end; }
.date { display: flex; align-items: center; width: 163px; height: 38px; border: 1px solid #dadbe6; border-radius: 5px; padding: 0 8px 0 9px; }
.date input { border: 0; background: none; width: 100%; min-width: 0; padding: 0; direction: ltr; text-align: right; }
.date .icon { width: 18px; height: 20px; color: #74779a; stroke-width: 1; }
::placeholder { color: #a7a9bb; opacity: 1; }

/* main */
.main { display: grid; grid-template-columns: minmax(0, 387fr) minmax(0, 763fr) minmax(0, 785fr); gap: 17px; padding: 34px 16px 0; }

.search { display: flex; align-items: center; gap: 8px; height: 41px; border: 1px solid #f0f0f6; border-radius: 10px; padding: 0 14px; }
.search input { border: 0; padding: 0; width: 74px; background: none; }
.search ::placeholder { color: var(--navy); }
.search .icon { width: 15px; height: 15px; color: var(--navy); }

.filter { padding: 22px 17px 21px 18px; box-shadow: 0 6px 12px #b9b9d055; }
.filter .search { width: 240px; }
.filter-head { display: flex; justify-content: space-between; align-items: center; height: 32px; margin: 20px 0 15px; }
.filter-head h2 { font-size: 23px; line-height: 32px; font-weight: 600; }
.clear { border: 0; background: none; padding: 0; font-size: 17px; color: var(--indigo); }
.scroller { display: flex; gap: 4px; }
.track { width: 4px; border-radius: 2px; background: #eff4fa; }
.thumb { height: 38px; border-radius: 2px; background: #5f5682; }
.list { flex: 1; font-size: 18px; }
.filter .track { margin: 4px 0 3px; }
.row { display: flex; align-items: center; gap: 9px; height: 42px; padding-inline-start: 34px; color: #85879f; }
.row + .row, .group + .row { border-top: 1px solid #f1f1f4; }
.row.on { color: var(--red); }
.chip-row { display: flex; align-items: center; justify-content: space-between; height: 63px; background: #fcfcfc; padding: 0 55px 6px 17px; }
.chip { display: flex; align-items: center; gap: 10px; height: 31px; padding: 0 12px 0 13px; border-radius: 16px; background: #d8effc; color: #3a93cc; font-size: 15px; }
.chip button { border: 0; padding: 0; background: none; width: 14px; height: 14px; line-height: 0; }
.reset { border: 0; padding: 0; background: none; width: 16px; height: 16px; line-height: 0; }
.reset svg { fill: none; stroke: var(--navy); stroke-width: 1; }
.group { background: #fcfcfc; padding-bottom: 5px; }
.group label { display: flex; align-items: center; gap: 9px; height: 38px; padding-inline-start: 55px; font-size: 15px; color: var(--grey); }
.group .on { color: var(--navy); }

.middle { display: flex; flex-direction: column; gap: 25px; }
.stack { display: flex; flex-direction: column; gap: 9px; }
table { width: 100%; border-collapse: separate; border-spacing: 0; table-layout: fixed; font-size: 9px; line-height: 12px; }
th { height: 41px; padding: 0; background: #edf3fb; text-align: start; font-weight: 400; }
th:first-child { border-radius: 0 10px 10px 0; }
th:last-child { border-radius: 10px 0 0 10px; }
.plain th:nth-child(1) { width: 192px; padding-inline-start: 148px; }
.plain th:nth-child(2), .plain th:nth-child(3) { width: 88px; padding-inline-start: 44px; }
.plain th:nth-child(4) { padding-inline-start: 94px; }
.box { display: block; appearance: none; margin: 0; width: 21px; height: 21px; background: #fff; border: 1px solid #d5d5da; border-radius: 2px; }
.tiny { width: 12px; height: 12px; border-color: #e6e6ee; }

.results { padding: 17px 17px 22px; display: flex; flex-direction: column; min-height: 239px; }
.pager { display: flex; justify-content: space-between; align-items: center; margin-top: auto; border-top: 1px solid #ededf2; padding: 12px 18px 0 10px; }
.pager nav { display: flex; gap: 6px; }
.pager button { width: 33px; height: 33px; border: 1px solid #eeeef3; border-radius: 6px; background: #fff; padding: 0 0 3px; font-size: 20px; }

.bar { display: flex; align-items: center; gap: 12px; padding: 13px 13px 12px; }
.bar-add { justify-content: space-between; }
.btn { display: flex; align-items: center; justify-content: center; gap: 8px; height: 42px; padding: 0 17px; border: 1px solid #4346a0; border-radius: 10px; background: #fff; color: var(--indigo); font-weight: 600; white-space: nowrap; }
.btn.wide { padding: 0 34px; gap: 13px; }
.btn.wide .icon { width: 16px; height: 16px; }
.btn.solid { background: var(--indigo); color: #fff; border-color: var(--indigo); }
.total { margin-inline-start: auto; padding-left: 6px; color: var(--red); font-weight: 600; }

.students h2, .pickups h2 { font-size: 26px; line-height: 36px; font-weight: 600; }
.students { padding: 18px 17px 21px; min-height: 316px; display: flex; flex-direction: column; }
.students h2 { margin-bottom: 16px; }
.students .scroller { flex: 1; align-items: flex-start; }
.students .track { align-self: stretch; margin-top: 4px; }
.rows th:nth-child(-n+3), .rows td:nth-child(-n+3) { width: 88px; padding-inline-start: 9px; }
.rows th:nth-child(4), .rows td:nth-child(4) { width: 51px; }
.rows th:nth-child(5) { padding-inline-start: 8px; }
.colfilter { display: flex; align-items: center; gap: 5px; }
.colfilter input { width: 53px; height: 12px; border: 0; border-radius: 2px; background: #fff; padding: 0 4px; font-size: 8px; }
.colfilter .icon { width: 9px; height: 9px; stroke-width: 1; }
td { height: 32px; padding: 0; font-weight: 700; border-bottom: 1px solid #fafafc; }
tr:last-child td { border: 0; }
.rows td:nth-child(4) { padding-inline-start: 30px; }
.rows td:nth-child(5) { padding-inline-start: 16px; }
td .icon { display: block; width: 8px; height: 8px; }

.pickups { padding: 19px 17px 0; min-height: 232px; }
.pickups h2 { margin-bottom: 15px; }
.pickups p { margin-top: 20px; text-align: center; color: var(--grey); }

.mapcard { padding: 16px 17px; }
.toolbar { display: flex; align-items: center; justify-content: space-between; gap: 12px; margin-bottom: 17px; }
.toolbar .search { width: 186px; height: 42px; }
.show-all { display: flex; align-items: center; gap: 9px; margin-inline-end: 26px; white-space: nowrap; color: #23284e; }
.btn.fit { padding: 0 16px; font-size: 16px; }
.btn.red { background: #ee5c4d; border-color: #ee5c4d; color: #fff; font-size: 15px; }
.map { display: block; width: 100%; aspect-ratio: 751 / 975; border-radius: 20px; direction: ltr; }
.urban { fill: #e8e9ee; }
.land { fill: #f1e9d9; }
.sea { fill: #9dc0fa; }
.green { fill: #bce2c8; }
.park { fill: #a6dab6; }
.street, .road, .road2 { fill: none; vector-effect: non-scaling-stroke; stroke-linejoin: round; stroke-linecap: butt; }
.street { stroke: #fff; stroke-width: 2; }
.road { stroke: #fbc250; stroke-width: 6; }
.road2 { stroke: #ffe6a0; stroke-width: 3; }
.road.big { stroke-width: 8; }
.road2.big { stroke-width: 4; }
.city text { text-anchor: middle; font-size: 22px; font-weight: 600; fill: #45474d; paint-order: stroke; stroke: #fffb; stroke-width: 2px; }
.city .lg text { font-size: 31px; fill: #2c2d31; }
.city .xl { font-size: 48px; fill: #202124; }
.city .air text { font-size: 25px; fill: #3676d8; }
.shields rect { x: -21px; y: -12px; width: 42px; height: 24px; rx: 4px; }
.shields path { d: path("M-15 -9Q0 -10 15 -9Q18 -9 18 -6Q17 0 18 6Q18 9 15 9Q0 10 -15 9Q-18 9 -18 6Q-17 0 -18 -6Q-18 -9 -15 -9z"); fill: #fff; }
.shields text { font: 700 16px Roboto, sans-serif; text-anchor: middle; dominant-baseline: central; }
.shields .b { fill: #3f74c2; }
.shields .g { fill: #3f9430; }
.shields .r { fill: #dc2350; }
```
